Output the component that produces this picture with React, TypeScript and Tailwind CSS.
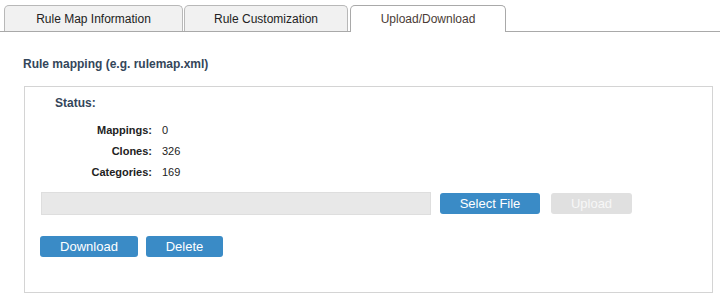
import React from "react";

export default function App() {
  const rows: [string, string][] = [
    ["Mappings:", "0"],
    ["Clones:", "326"],
    ["Categories:", "169"],
  ];
  return (
    <div className="w-[720px] h-[297px] bg-white overflow-hidden font-['Liberation_Sans',Arial,sans-serif]">
      <div className="flex items-end h-[32px] pt-[5px] pl-[3px] border-b border-[#a9a9a9]">
        <div className="ml-px w-[179px] h-[26px] border border-b-0 border-[#b8b8b8] rounded-t-[5px] bg-[#f1f1f1] text-[12px] text-[#222] flex items-center justify-center">
          Rule Map Information
        </div>
        <div className="ml-px w-[164px] h-[26px] border border-b-0 border-[#b8b8b8] rounded-t-[5px] bg-[#f1f1f1] text-[12px] text-[#222] flex items-center justify-center">
          Rule Customization
        </div>
        <div className="ml-[2px] w-[156px] h-[27px] -mb-px border border-b-0 border-[#a9a9a9] rounded-t-[5px] bg-white text-[12px] text-[#4a3b36] flex items-center justify-center pb-px">
          Upload/Download
        </div>
      </div>

      <div className="mt-[25px] ml-[23px] text-[12px] leading-[14px] font-bold text-[#34465a]">
        Rule mapping (e.g. rulemap.xml)
      </div>

      <div className="mt-[15px] ml-[24px] w-[689px] h-[207px] border border-[#d4d4d4] pt-[9px] pl-[15px]">
        <div className="ml-[15px] text-[12px] leading-[14px] font-bold text-[#34465a]">Status:</div>
        <div className="mt-[10px] -ml-[15px] grid grid-cols-[127px_auto] gap-x-[10px] text-[11px] text-[#222]">
          {rows.map(([k, v]) => (
            <React.Fragment key={k}>
              <div className="h-[21px] leading-[21px] text-right font-bold">{k}</div>
              <div className="h-[21px] leading-[21px]">{v}</div>
            </React.Fragment>
          ))}
        </div>
        <div className="mt-[9px] flex items-center">
          <div className="ml-px w-[390px] h-[23px] bg-[#e8e8e8] border border-[#dedede]" />
          <button className="ml-[9px] w-[100px] h-[21px] rounded-[3px] bg-[#3a8bc6] text-white text-[13px] leading-[21px]">
            Select File
          </button>
          <button className="ml-[11px] w-[81px] h-[21px] rounded-[3px] bg-[#e0e0e0] text-[#f7f7f7] text-[13px] leading-[21px]">
            Upload
          </button>
        </div>
        <div className="mt-[21px] flex">
          <button className="w-[98px] h-[21px] rounded-[3px] bg-[#3a8bc6] text-white text-[13px] leading-[21px]">
            Download
          </button>
          <button className="ml-[8px] w-[77px] h-[21px] rounded-[3px] bg-[#3a8bc6] text-white text-[13px] leading-[21px]">
            Delete
          </button>
        </div>
      </div>
    </div>
  );
}
